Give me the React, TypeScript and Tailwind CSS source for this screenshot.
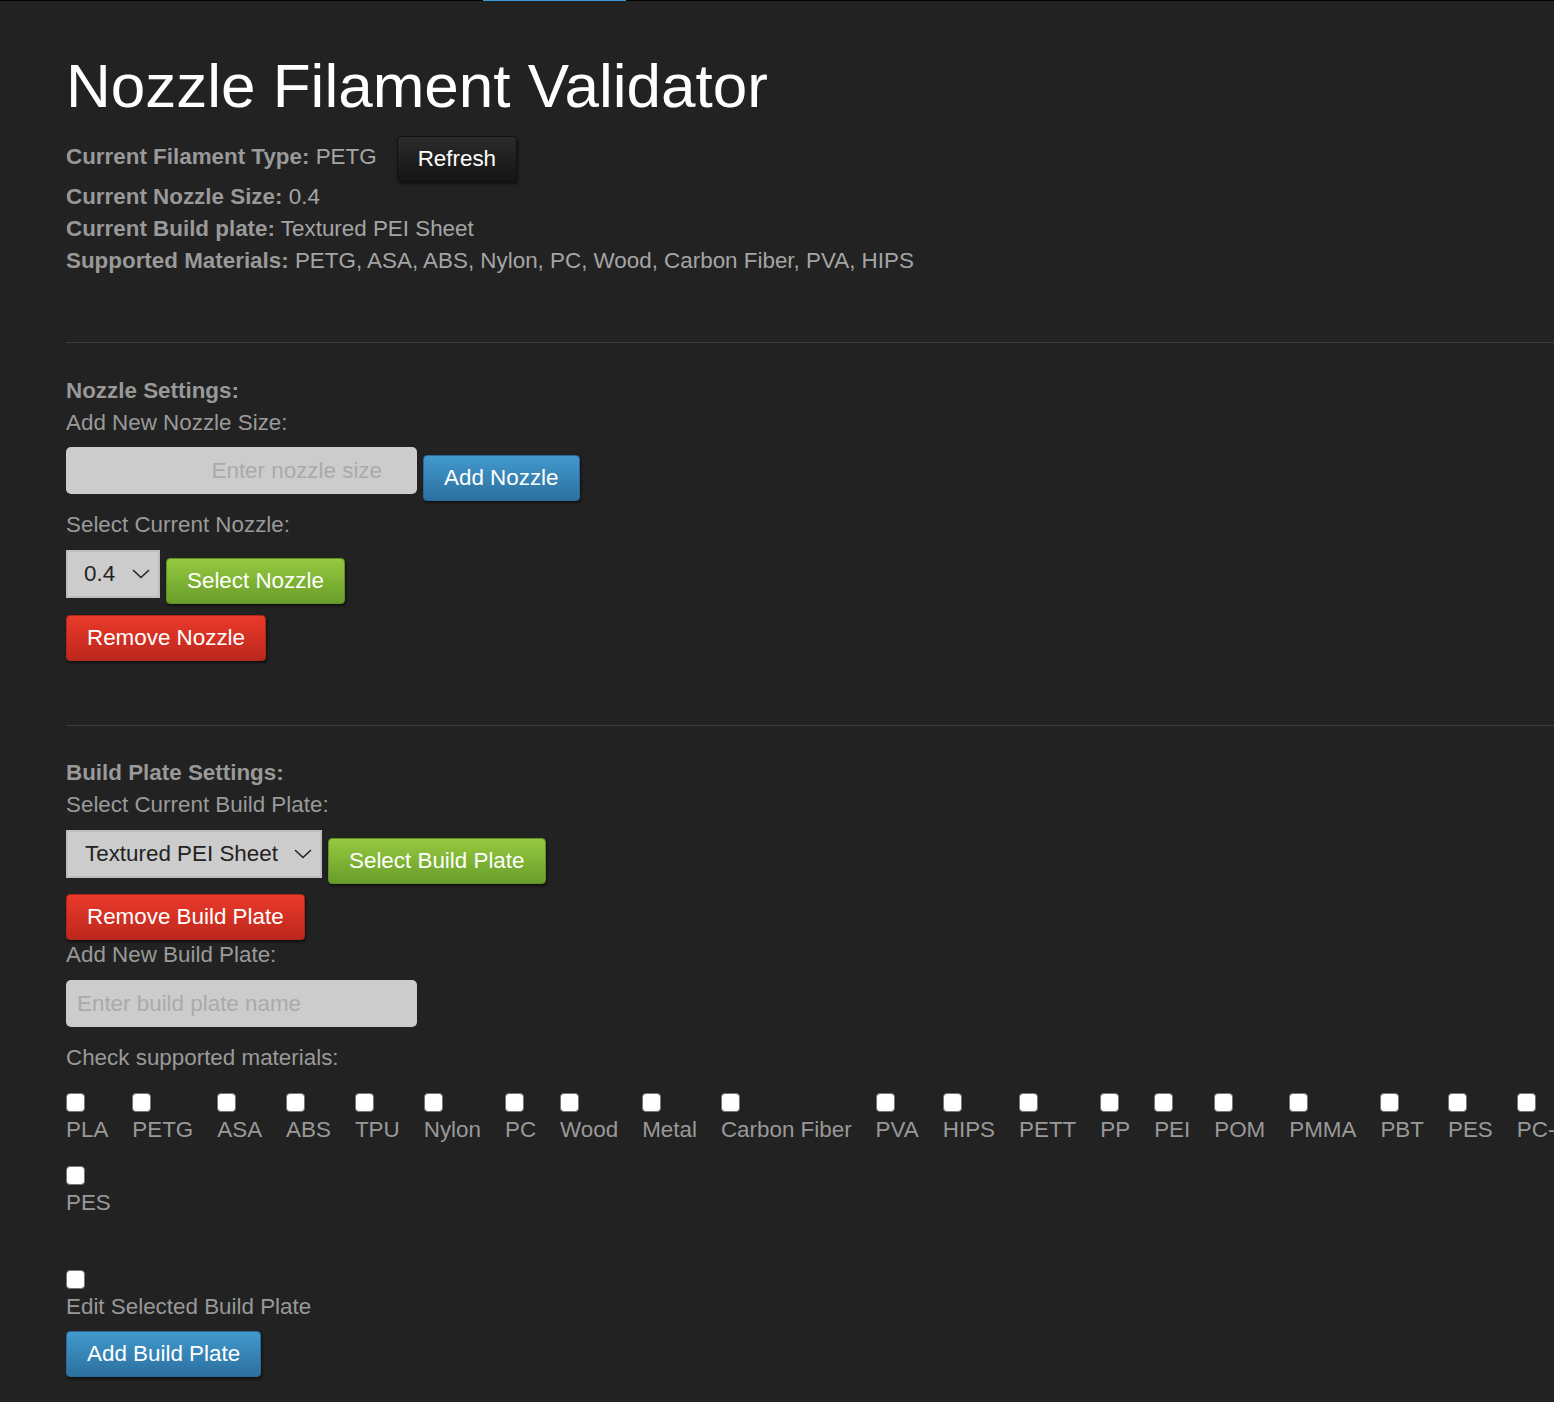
import React from "react"

const materials = [
  "PLA", "PETG", "ASA", "ABS", "TPU", "Nylon", "PC", "Wood", "Metal", "Carbon Fiber",
  "PVA", "HIPS", "PETT", "PP", "PEI", "POM", "PMMA", "PBT", "PES", "PC-ABS",
]

function Chevron() {
  return (
    <svg width="18" height="10" viewBox="0 0 18 10" fill="none" className="shrink-0">
      <path d="M1.5 1.5 L9 8.5 L16.5 1.5" stroke="#222" strokeWidth="1.6" strokeLinecap="round" strokeLinejoin="round" />
    </svg>
  )
}

function Btn({ color, children, className = "" }: { color: "blue" | "green" | "red" | "dark"; children: React.ReactNode; className?: string }) {
  const tone = {
    blue: "bg-gradient-to-b from-[#4299cd] to-[#2c70a0] border-[#2a6896]",
    green: "bg-gradient-to-b from-[#96c93f] to-[#689d2a] border-[#5f9126]",
    red: "bg-gradient-to-b from-[#ea3a2b] to-[#bd271d] border-[#b0251c]",
    dark: "bg-gradient-to-b from-[#2c2c2c] to-[#141414] border-[#111]",
  }[color]
  return (
    <button
      className={`h-[46px] px-[20px] rounded-[4px] border text-white text-[22.4px] leading-none shadow-[1px_2px_3px_rgba(0,0,0,0.55)] ${tone} ${className}`}
    >
      {children}
    </button>
  )
}

function Line({ children, className = "" }: { children: React.ReactNode; className?: string }) {
  return <div className={`h-[32px] leading-[32px] text-[22.4px] text-[#9a9a9a] whitespace-nowrap ${className}`}>{children}</div>
}

function Info({ label, value }: { label: string; value: string }) {
  return (
    <Line>
      <span className="font-bold text-[#999]">{label}</span> <span className="text-[#a5a5a5]">{value}</span>
    </Line>
  )
}

function Box() {
  return (
    <input
      type="checkbox"
      className="appearance-none block w-[19px] h-[19px] bg-white border border-[#767676] rounded-[4px]"
    />
  )
}

export default function App() {
  return (
    <div className="min-h-[1402px] bg-[#222222] overflow-hidden font-['Liberation_Sans',Arial,sans-serif]">
      <div className="h-[1px] bg-black">
        <div className="ml-[483px] w-[143px] h-[1px] bg-[#3a9ad9]" />
      </div>

      <div className="pl-[66px]">
        <h1 className="mt-[49px] text-[62px] leading-[72px] text-white">Nozzle Filament Validator</h1>

        <div className="mt-[15px] flex items-center h-[44px]">
          <div className="text-[22.4px] text-[#9a9a9a] -mt-[4px]">
            <span className="font-bold text-[#999]">Current Filament Type:</span> <span className="text-[#a5a5a5]">PETG</span>
          </div>
          <Btn color="dark" className="ml-[20px] h-[44px]">Refresh</Btn>
        </div>
        <Info label="Current Nozzle Size:" value="0.4" />
        <Info label="Current Build plate:" value="Textured PEI Sheet" />
        <Info label="Supported Materials:" value="PETG, ASA, ABS, Nylon, PC, Wood, Carbon Fiber, PVA, HIPS" />

        <hr className="mt-[65px] border-0 h-[1px] bg-[#3b3b3b]" />

        <Line className="mt-[32px] font-bold text-[#999]">Nozzle Settings:</Line>
        <Line>Add New Nozzle Size:</Line>
        <div className="mt-[8px] flex items-start gap-[6px]">
          <input
            placeholder="Enter nozzle size"
            className="w-[351px] h-[47px] rounded-[5px] bg-[#cccccc] text-right pr-[35px] text-[22.4px] text-[#333] placeholder:text-[#aaaaaa] outline-none"
          />
          <Btn color="blue" className="mt-[8px]">Add Nozzle</Btn>
        </div>

        <Line className="mt-[8px]">Select Current Nozzle:</Line>
        <div className="mt-[9px] flex items-start gap-[6px]">
          <div className="w-[94px] h-[48px] bg-[#cccccc] border-2 border-[#bdbdbd] flex items-center justify-between pl-[16px] pr-[8px] text-[22.4px] text-[#222]">
            <span>0.4</span>
            <Chevron />
          </div>
          <Btn color="green" className="mt-[8px]">Select Nozzle</Btn>
        </div>
        <Btn color="red" className="mt-[11px] block">Remove Nozzle</Btn>

        <hr className="mt-[64px] border-0 h-[1px] bg-[#3b3b3b]" />

        <Line className="mt-[31px] font-bold text-[#999]">Build Plate Settings:</Line>
        <Line>Select Current Build Plate:</Line>
        <div className="mt-[9px] flex items-start gap-[6px]">
          <div className="w-[256px] h-[48px] bg-[#cccccc] border-2 border-[#bdbdbd] flex items-center justify-between pl-[17px] pr-[8px] text-[22.4px] text-[#222]">
            <span>Textured PEI Sheet</span>
            <Chevron />
          </div>
          <Btn color="green" className="mt-[8px]">Select Build Plate</Btn>
        </div>
        <Btn color="red" className="mt-[10px] block">Remove Build Plate</Btn>
        <Line className="-mt-[1px]">Add New Build Plate:</Line>
        <input
          placeholder="Enter build plate name"
          className="mt-[9px] block w-[351px] h-[47px] rounded-[5px] bg-[#cccccc] pl-[11px] text-[22.4px] text-[#333] placeholder:text-[#aaaaaa] outline-none"
        />

        <Line className="mt-[15px]">Check supported materials:</Line>
        <div className="mt-[19px] flex flex-nowrap gap-[24px]">
          {materials.map((m) => (
            <label key={m} className="flex flex-col shrink-0">
              <Box />
              <span className="mt-[2px] h-[32px] leading-[32px] text-[22.4px] text-[#999] whitespace-nowrap">{m}</span>
            </label>
          ))}
        </div>
        <label className="mt-[20px] flex flex-col w-max">
          <Box />
          <span className="mt-[2px] h-[32px] leading-[32px] text-[22.4px] text-[#999]">PES</span>
        </label>

        <label className="mt-[51px] flex flex-col w-max">
          <Box />
          <span className="mt-[2px] h-[32px] leading-[32px] text-[22.4px] text-[#999]">Edit Selected Build Plate</span>
        </label>
        <Btn color="blue" className="mt-[8px] block">Add Build Plate</Btn>
      </div>
    </div>
  )
}
